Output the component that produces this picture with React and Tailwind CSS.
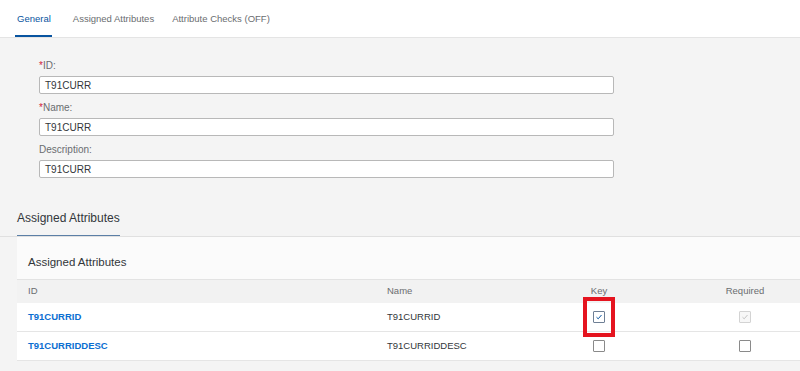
import React from 'react';

const font = { fontFamily: '"Liberation Sans", Arial, sans-serif' };

const Field = ({ label, required, value }) => (
  <div className="flex flex-col">
    <label className="h-[19px] flex items-center text-[10px] text-[#6a6d70]">
      {required && <span className="text-[#d0213a]">*</span>}
      {label}
    </label>
    <div className="mt-[1px] h-[18px] w-[575px] border border-[#b8b8b8] rounded-[2px] bg-white flex items-center px-[5px] text-[10px] text-[#32363a]">
      {value}
    </div>
  </div>
);

const Checkbox = ({ checked, disabled }) => (
  <div
    className={
      'w-[12px] h-[12px] rounded-[1px] border flex items-center justify-center ' +
      (disabled ? 'border-[#d3d3d3] bg-[#f7f7f7]' : checked ? 'border-[#6e7f95] bg-white' : 'border-[#8a8a8a] bg-white')
    }
  >
    {checked && (
      <svg width="8" height="8" viewBox="0 0 8 8">
        <path d="M1.5 4.2 L3.2 5.8 L6.5 2" fill="none" stroke={disabled ? '#c4c4c4' : '#0854a0'} strokeWidth="1" />
      </svg>
    )}
  </div>
);

const rows = [
  { id: 'T91CURRID', name: 'T91CURRID', key: true, required: true, reqDisabled: true, highlight: true },
  { id: 'T91CURRIDDESC', name: 'T91CURRIDDESC', key: false, required: false },
];

export default function App() {
  return (
    <div className="w-[800px] h-[371px] overflow-hidden bg-[#f4f4f4]" style={font}>
      {/* tabs */}
      <div className="h-[38px] bg-white border-b border-[#e4e4e4] flex items-end pl-[15px] text-[9.5px]">
        <div className="h-full flex flex-col justify-end">
          <span className="px-[2px] pb-[9px] text-[#0854a0]">General</span>
          <div className="h-[2px] bg-[#0854a0] w-[37px]" />
        </div>
        <span className="ml-[20px] pb-[11px] text-[#6a6d70]">Assigned Attributes</span>
        <span className="ml-[18px] pb-[11px] text-[#6a6d70]">Attribute Checks (OFF)</span>
      </div>

      {/* form */}
      <div className="pl-[39px] pt-[18px] flex flex-col gap-[4px]">
        <Field label="ID:" required value="T91CURR" />
        <Field label="Name:" required value="T91CURR" />
        <Field label="Description:" value="T91CURR" />
      </div>

      {/* section header */}
      <div className="mt-[27px] border-b border-[#e0e0e0]">
        <div className="ml-[17px] inline-flex flex-col">
          <span className="text-[12px] text-[#32363a] pb-[8px]">Assigned Attributes</span>
          <div className="h-[1px] bg-[#5b7fa6]" />
        </div>
      </div>

      {/* table card */}
      <div className="ml-[17px] bg-[#fbfbfb]">
        <div className="h-[42px] pt-[18px] pl-[11px] text-[11.5px] leading-[15px] text-[#32363a]">Assigned Attributes</div>
        <div className="h-[24px] flex items-center bg-[#f2f2f2] border-t border-[#e3e3e3] text-[9.5px] text-[#6a6d70]">
          <div className="w-[370px] pl-[11px]">ID</div>
          <div className="w-[153px]">Name</div>
          <div className="w-[118px] text-center">Key</div>
          <div className="w-[110px] ml-[32px] text-center">Required</div>
        </div>
        {rows.map((r) => (
          <div key={r.id} className="h-[29px] flex items-center bg-white border-b border-[#e5e5e5] text-[9.5px]">
            <div className="w-[370px] pl-[11px] font-bold text-[#0a6ed1]">{r.id}</div>
            <div className="w-[153px] text-[#32363a]">{r.name}</div>
            <div className="w-[118px] flex justify-center">
              <div className="relative">
                <Checkbox checked={r.key} />
                {r.highlight && (
                  <div className="absolute -left-[10px] -top-[14px] w-[32px] h-[40px] border-[4px] border-[#e5141f]" />
                )}
              </div>
            </div>
            <div className="w-[110px] ml-[32px] flex justify-center">
              <Checkbox checked={r.required} disabled={r.reqDisabled} />
            </div>
          </div>
        ))}
      </div>
    </div>
  );
}
